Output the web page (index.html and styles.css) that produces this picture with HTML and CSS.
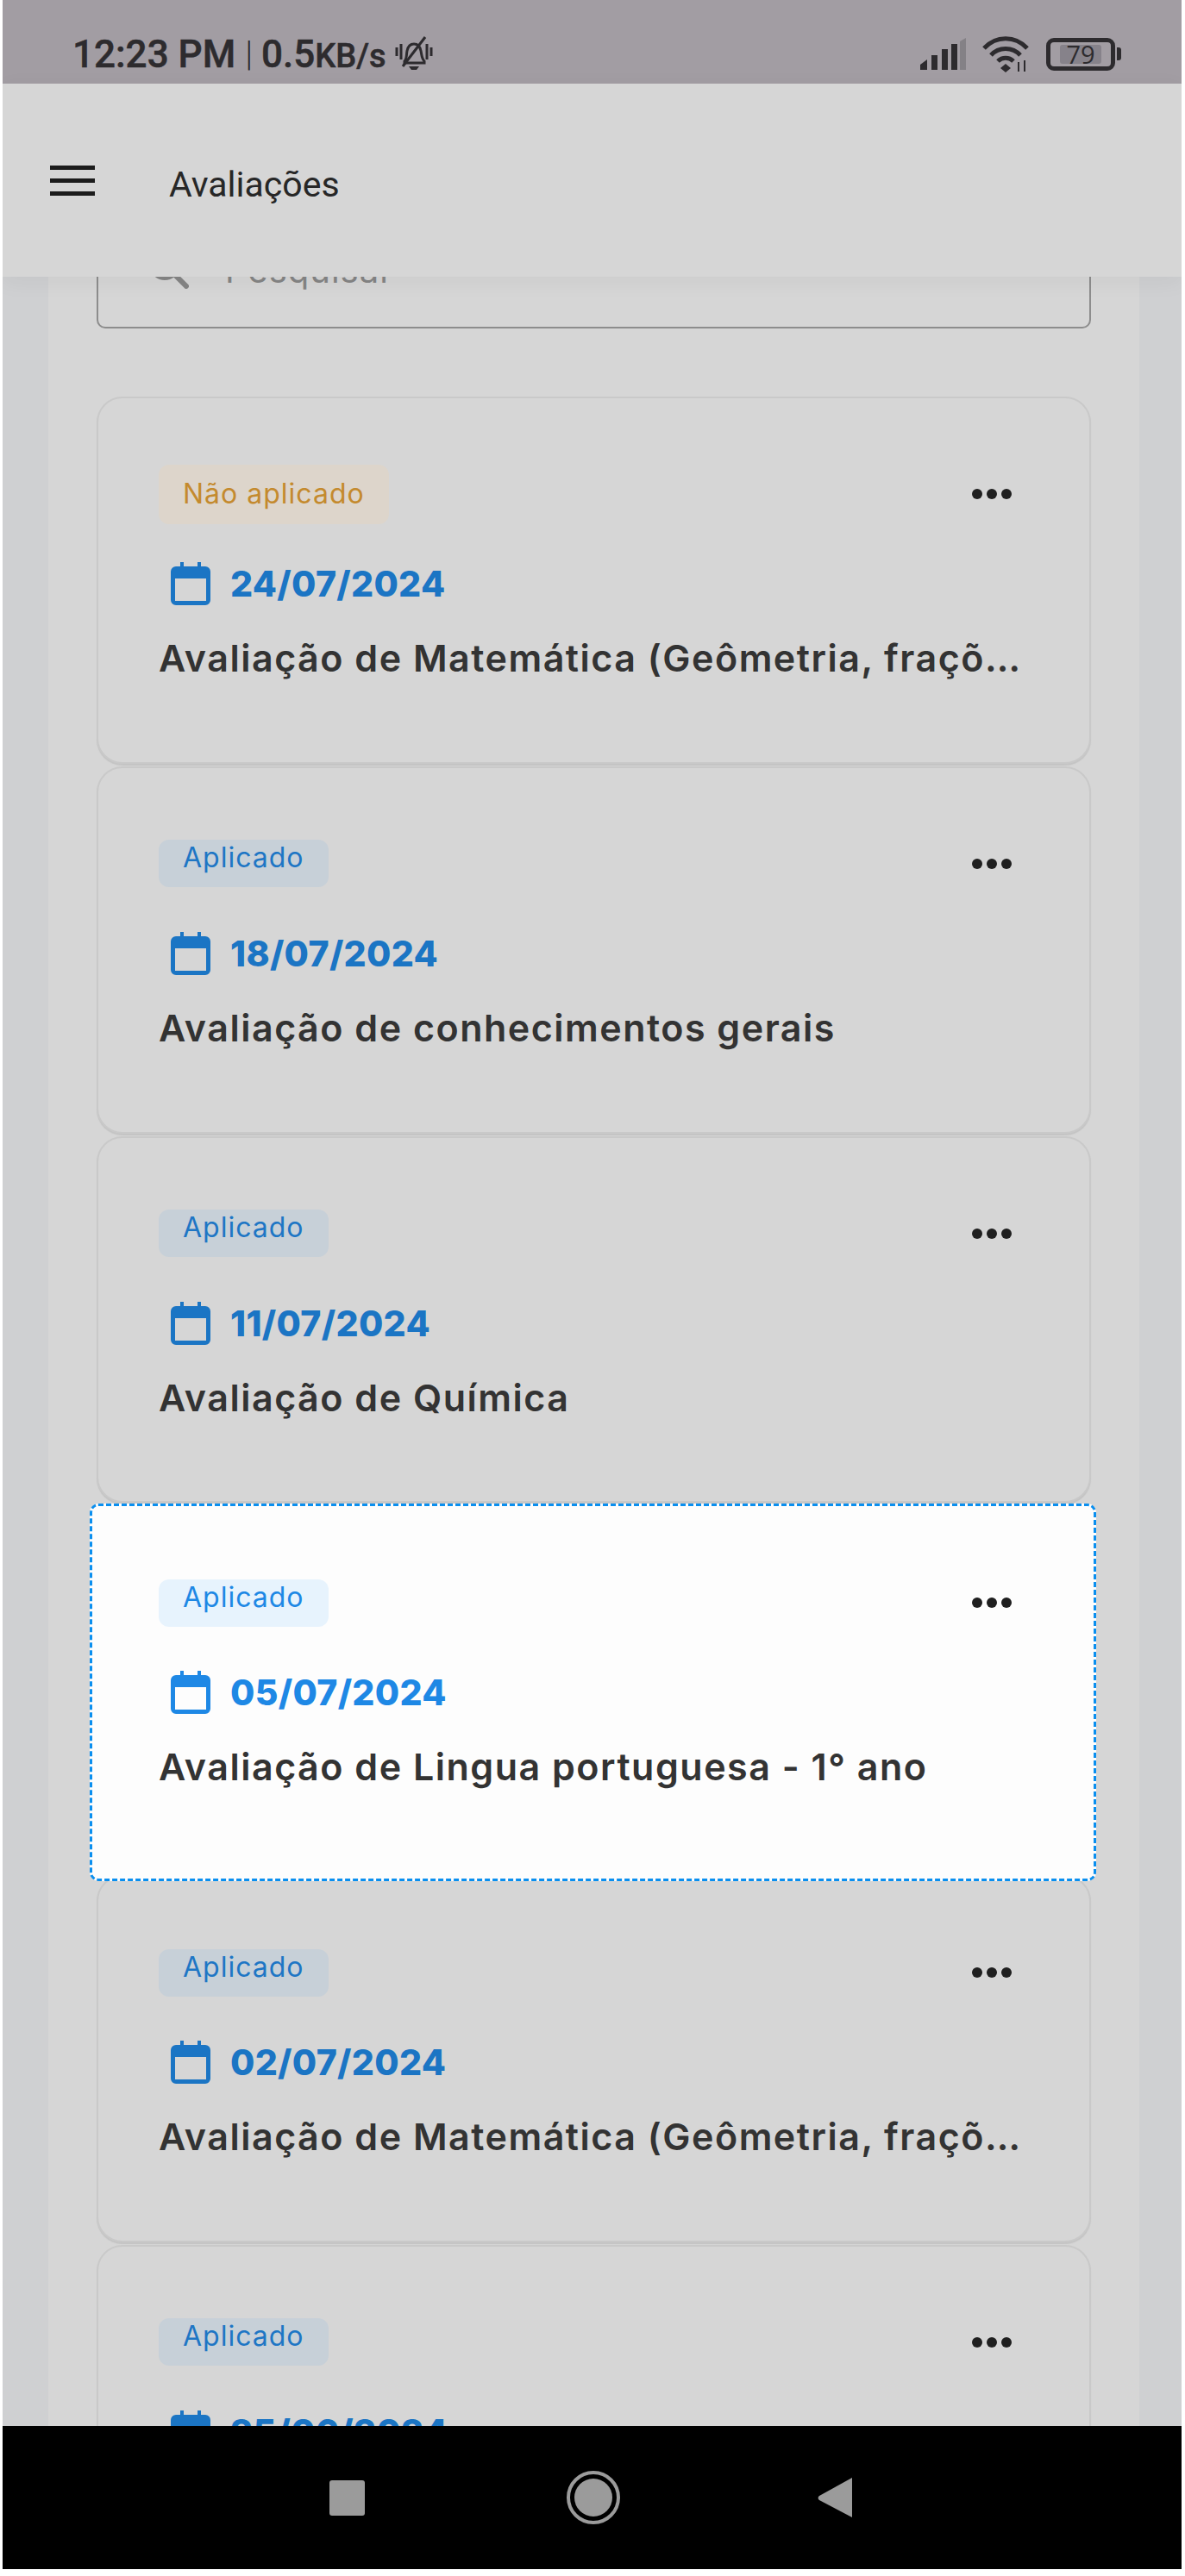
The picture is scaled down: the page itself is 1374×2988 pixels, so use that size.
FILE: index.html
```html
<!DOCTYPE html>
<html lang="pt-BR">
<head>
<meta charset="UTF-8">
<meta name="viewport" content="width=device-width, initial-scale=1.0">
<title>Avaliações</title>
<link rel="stylesheet" href="styles.css">
</head>
<body>
<div id="screen">
  <div class="status-bar">
    <div class="status-left">
      <span class="status-time">12:23 PM</span>
      <span class="status-sep">|</span>
      <span class="status-speed">0.5<small>KB/s</small></span>
      <svg class="bell" viewBox="0 0 44 42" fill="none" stroke="#2d2b2e" stroke-width="3">
        <path d="M11 29c3-3 2-7 3-12 1-5 4-8 8-8s7 3 8 8c1 5 1 9 4 12v2H11z"/>
        <path d="M16 35h12l-3 4h-6z" fill="#2d2b2e" stroke="none"/>
        <path d="M2 13v10M7 9v18M37 9v18M42 13v10" stroke-width="3"/>
        <path d="M9 35 35 1"/>
      </svg>
    </div>
    <div class="status-right">
      <svg class="signal" viewBox="0 0 53 37">
        <path d="M0 37v-6l8-6v12z" fill="#2d2b2e"/>
        <rect x="13" y="20" width="7" height="17" fill="#2d2b2e"/>
        <rect x="25" y="13" width="7" height="24" fill="#2d2b2e"/>
        <rect x="36" y="7" width="7" height="30" fill="#2d2b2e"/>
        <path d="M46 4l7-4v37h-7z" fill="#848186"/>
      </svg>
      <svg class="wifi" viewBox="0 0 54 42" fill="none" stroke="#2d2b2e" stroke-width="5">
        <path d="M2 14c14-15 36-15 50 0"/>
        <path d="M10 22c9-10 25-10 34 0"/>
        <path d="M18 29c5-5 13-5 18 0"/>
        <path d="M27 32l6 5-6 5-6-5z" fill="#2d2b2e" stroke="none"/>
        <path d="M42 30v11M49 28v13" stroke-width="2"/>
      </svg>
      <div class="battery">
        <div class="battery-body"><span class="battery-level">79</span></div>
        <div class="battery-tip"></div>
      </div>
    </div>
  </div>

  <div class="app-bar">
    <div class="menu-icon"><span></span><span></span><span></span></div>
    <div class="app-title">Avaliações</div>
  </div>

  <div class="content">
    <div class="panel">
      <div class="search-box">
        <svg class="search-icon" viewBox="0 0 48 48" fill="none" stroke="#858585" stroke-width="6">
          <circle cx="20" cy="20" r="15"/>
          <path d="M31 31l16 16"/>
        </svg>
        <span class="search-text">Pesquisar</span>
      </div>

      <div class="card">
        <div class="card-top">
          <span class="badge badge-pending">Não aplicado</span>
          <div class="dots"><i></i><i></i><i></i></div>
        </div>
        <div class="date-row">
          <svg class="cal" viewBox="0 0 46 50"><path d="M11 0h4v5h16V0h4v5h5a6 6 0 0 1 6 6v33a6 6 0 0 1-6 6H6a6 6 0 0 1-6-6V11a6 6 0 0 1 6-6h5zM5 19v26h36V19z"/></svg>
          <span class="date">24/07/2024</span>
        </div>
        <div class="card-title">Avaliação de Matemática (Geômetria, frações e decimais)</div>
      </div>

      <div class="card">
        <div class="card-top">
          <span class="badge">Aplicado</span>
          <div class="dots"><i></i><i></i><i></i></div>
        </div>
        <div class="date-row">
          <svg class="cal" viewBox="0 0 46 50"><path d="M11 0h4v5h16V0h4v5h5a6 6 0 0 1 6 6v33a6 6 0 0 1-6 6H6a6 6 0 0 1-6-6V11a6 6 0 0 1 6-6h5zM5 19v26h36V19z"/></svg>
          <span class="date">18/07/2024</span>
        </div>
        <div class="card-title">Avaliação de conhecimentos gerais</div>
      </div>

      <div class="card">
        <div class="card-top">
          <span class="badge">Aplicado</span>
          <div class="dots"><i></i><i></i><i></i></div>
        </div>
        <div class="date-row">
          <svg class="cal" viewBox="0 0 46 50"><path d="M11 0h4v5h16V0h4v5h5a6 6 0 0 1 6 6v33a6 6 0 0 1-6 6H6a6 6 0 0 1-6-6V11a6 6 0 0 1 6-6h5zM5 19v26h36V19z"/></svg>
          <span class="date">11/07/2024</span>
        </div>
        <div class="card-title">Avaliação de Química</div>
      </div>

      <div class="card card-active">
        <div class="card-top">
          <span class="badge">Aplicado</span>
          <div class="dots"><i></i><i></i><i></i></div>
        </div>
        <div class="date-row">
          <svg class="cal" viewBox="0 0 46 50"><path d="M11 0h4v5h16V0h4v5h5a6 6 0 0 1 6 6v33a6 6 0 0 1-6 6H6a6 6 0 0 1-6-6V11a6 6 0 0 1 6-6h5zM5 19v26h36V19z"/></svg>
          <span class="date">05/07/2024</span>
        </div>
        <div class="card-title">Avaliação de Lingua portuguesa - 1° ano</div>
      </div>

      <div class="card">
        <div class="card-top">
          <span class="badge">Aplicado</span>
          <div class="dots"><i></i><i></i><i></i></div>
        </div>
        <div class="date-row">
          <svg class="cal" viewBox="0 0 46 50"><path d="M11 0h4v5h16V0h4v5h5a6 6 0 0 1 6 6v33a6 6 0 0 1-6 6H6a6 6 0 0 1-6-6V11a6 6 0 0 1 6-6h5zM5 19v26h36V19z"/></svg>
          <span class="date">02/07/2024</span>
        </div>
        <div class="card-title">Avaliação de Matemática (Geômetria, frações e decimais)</div>
      </div>

      <div class="card">
        <div class="card-top">
          <span class="badge">Aplicado</span>
          <div class="dots"><i></i><i></i><i></i></div>
        </div>
        <div class="date-row">
          <svg class="cal" viewBox="0 0 46 50"><path d="M11 0h4v5h16V0h4v5h5a6 6 0 0 1 6 6v33a6 6 0 0 1-6 6H6a6 6 0 0 1-6-6V11a6 6 0 0 1 6-6h5zM5 19v26h36V19z"/></svg>
          <span class="date">25/06/2024</span>
        </div>
        <div class="card-title">Avaliação de História</div>
      </div>
    </div>
  </div>

  <div class="nav-bar">
    <div class="nav-square"></div>
    <div class="nav-home"><div class="nav-home-dot"></div></div>
    <svg class="nav-back" viewBox="0 0 40 46"><path d="M40 0v46L2 26a3 3 0 0 1 0-5z" fill="#9b9b9b"/></svg>
  </div>
</div>
</body>
</html>
```

FILE: styles.css
```css
html, body {
  margin: 0;
  padding: 0;
  background-color: white;
}

#screen {
  width: 1367px;
  height: 2980px;
  margin-left: 3px;
  display: flex;
  flex-direction: column;
  overflow: hidden;
  font-family: Inter, 'Noto Sans', sans-serif;
}

/* status bar */
.status-bar {
  height: 97px;
  flex-shrink: 0;
  display: flex;
  justify-content: space-between;
  align-items: center;
  box-sizing: border-box;
  padding: 28px 70px 0 81px;
  background-color: #a29da3;
}

.status-left, .status-right {
  display: flex;
  align-items: center;
}

.status-time, .status-speed {
  font-family: Roboto, sans-serif;
  font-size: 44px;
  font-weight: 500;
  color: #2d2b2e;
  -webkit-text-stroke: 0.5px #2d2b2e;
}

.status-speed small {
  font-size: 38px;
}

.status-sep {
  margin: 0 10px 0 11px;
  font-family: Roboto, sans-serif;
  font-size: 40px;
  font-weight: 300;
  color: #2d2b2e;
}

.bell {
  width: 44px;
  height: 42px;
  margin-left: 10px;
}

.signal {
  width: 53px;
  height: 37px;
}

.wifi {
  width: 54px;
  height: 42px;
  margin-left: 19px;
}

.battery {
  display: flex;
  align-items: center;
  margin-left: 20px;
}

.battery-body {
  width: 80px;
  height: 38px;
  box-sizing: border-box;
  display: flex;
  align-items: center;
  justify-content: center;
  border: 5px solid #2d2b2e;
  border-radius: 9px;
}

.battery-level {
  padding: 0 7px;
  background-color: #86828a;
  font-family: 'Open Sans', sans-serif;
  font-size: 29px;
  line-height: 22px;
  color: #2d2b2e;
  border-radius: 3px;
}

.battery-tip {
  width: 5px;
  height: 15px;
  margin-left: 2px;
  border-radius: 0 3px 3px 0;
  background-color: #2d2b2e;
}

/* app bar */
.app-bar {
  height: 224px;
  flex-shrink: 0;
  position: relative;
  z-index: 3;
  display: flex;
  align-items: center;
  box-sizing: border-box;
  padding: 0 0 0 55px;
  background-color: #d6d6d6;
  box-shadow: 0 6px 24px rgba(0, 0, 0, 0.05);
}

.menu-icon {
  width: 52px;
  height: 35px;
  display: flex;
  flex-direction: column;
  justify-content: space-between;
}

.menu-icon span {
  height: 5px;
  background-color: #1c1c1c;
}

.app-title {
  margin: 9px 0 0 86px;
  font-family: Roboto, sans-serif;
  font-size: 41px;
  color: #272727;
}

/* scrolled content */
.content {
  flex: 1;
  min-height: 0;
  overflow: hidden;
  padding: 0 49px 0 53px;
  background-color: #cfd0d2;
}

.panel {
  display: flow-root;
  padding: 0 56px;
  background-color: #d6d6d6;
  height: 100%;
}

.search-box {
  height: 141px;
  margin-top: -81px;
  margin-bottom: 79px;
  box-sizing: border-box;
  display: flex;
  align-items: center;
  padding: 0 0 0 57px;
  border: 2px solid #8d8d8d;
  border-radius: 10px;
}

.search-icon {
  width: 48px;
  height: 48px;
  flex-shrink: 0;
}

.search-text {
  margin: 6px 0 0 42px;
  font-size: 40px;
  letter-spacing: 1px;
  color: #858585;
}

/* cards */
.card {
  height: 425.8px;
  box-sizing: border-box;
  position: relative;
  margin-bottom: 3px;
  padding: 0 74px 0 70px;
  border: 2px solid #c9c9c9;
  border-radius: 30px;
  background-color: #d6d6d6;
  box-shadow: 0 2px 1px #c4c4c4;
}

.card-top {
  height: 70px;
  margin-top: 76px;
  display: flex;
  justify-content: space-between;
  align-items: center;
}

.badge {
  box-sizing: border-box;
  height: 55px;
  padding: 3px 28px 0;
  border-radius: 12px;
  background-color: #c7d0d8;
  color: #1e76c5;
  font-size: 32px;
  line-height: 36px;
  letter-spacing: 1px;
}

.badge-pending {
  height: 69px;
  padding-top: 16px;
  background-color: #ddd5cb;
  color: #c48a2e;
}

.dots {
  display: flex;
  gap: 5px;
  margin-right: 16px;
}

.dots i {
  width: 12px;
  height: 12px;
  border-radius: 50%;
  background-color: #1f1f1f;
}

.date-row {
  display: flex;
  align-items: center;
  margin: 44px 0 0 14px;
  height: 50px;
}

.cal {
  width: 46px;
  height: 50px;
  fill: #1b75c4;
}

.date {
  margin-left: 23px;
  font-size: 41px;
  font-weight: 800;
  letter-spacing: 0.3px;
  color: #1b75c4;
}

.card-title {
  margin-top: 35px;
  font-size: 43px;
  font-weight: 600;
  letter-spacing: 1.5px;
  color: #333;
  white-space: nowrap;
  overflow: hidden;
  text-overflow: ellipsis;
}

.card-active {
  z-index: 2;
  border-color: #e6e6e6;
  background-color: #fcfcfc;
  box-shadow: 0 4px 1px #e8e8e8;
}

/* dashed spotlight round the selected card */
.card-active::before {
  content: '';
  position: absolute;
  top: -4px;
  right: -8px;
  bottom: -12px;
  left: -10px;
  z-index: -1;
  border: 3px dashed #0a8fef;
  border-radius: 10px;
  background-color: #fdfdfd;
}

.card-active .badge {
  background-color: #e7f3fd;
  color: #1e88e5;
}

.card-active .cal {
  fill: #1e88e5;
}

.card-active .date {
  color: #1e88e5;
}

/* navigation bar */
.nav-bar {
  height: 166px;
  flex-shrink: 0;
  position: relative;
  z-index: 3;
  display: flex;
  align-items: center;
  background-color: black;
}

.nav-square {
  width: 41px;
  height: 41px;
  margin-left: 379px;
  border-radius: 3px;
  background-color: #9b9b9b;
}

.nav-home {
  width: 62px;
  height: 62px;
  margin-left: 234px;
  box-sizing: border-box;
  display: flex;
  align-items: center;
  justify-content: center;
  border: 4px solid #9b9b9b;
  border-radius: 50%;
}

.nav-home-dot {
  width: 44px;
  height: 44px;
  border-radius: 50%;
  background-color: #9b9b9b;
}

.nav-back {
  width: 40px;
  height: 46px;
  margin-left: 229px;
}
```
